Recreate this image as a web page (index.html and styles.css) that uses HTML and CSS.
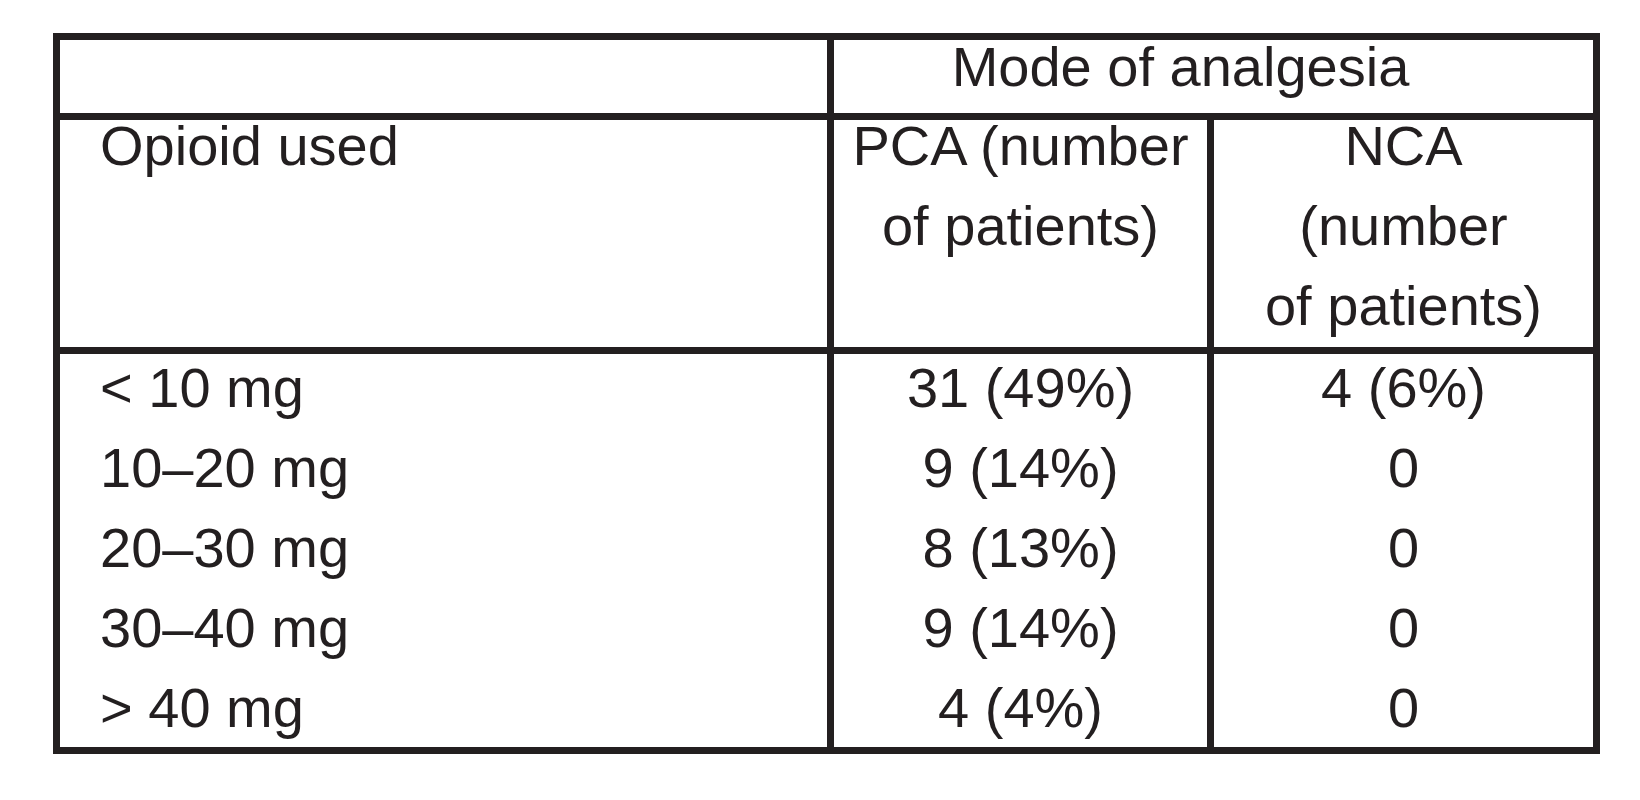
FILE: index.html
```html
<!DOCTYPE html>
<html lang="en">
<head>
<meta charset="utf-8">
<title>Opioid used by mode of analgesia</title>
<link rel="stylesheet" href="styles.css">
</head>
<body>
<div class="table">
  <div class="cell"></div>
  <div class="cell span2 group-head">Mode of analgesia</div>

  <div class="cell col-head left">
    <div class="line">Opioid used</div>
  </div>
  <div class="cell col-head center">
    <div class="line">PCA (number</div>
    <div class="line">of patients)</div>
  </div>
  <div class="cell col-head center">
    <div class="line">NCA</div>
    <div class="line">(number</div>
    <div class="line">of patients)</div>
  </div>

  <div class="cell body left">
    <div class="rows">
      <div class="row">&lt; 10 mg</div>
      <div class="row">10–20 mg</div>
      <div class="row">20–30 mg</div>
      <div class="row">30–40 mg</div>
      <div class="row">&gt; 40 mg</div>
    </div>
  </div>
  <div class="cell body center">
    <div class="rows">
      <div class="row">31 (49%)</div>
      <div class="row">9 (14%)</div>
      <div class="row">8 (13%)</div>
      <div class="row">9 (14%)</div>
      <div class="row">4 (4%)</div>
    </div>
  </div>
  <div class="cell body center">
    <div class="rows">
      <div class="row">4 (6%)</div>
      <div class="row">0</div>
      <div class="row">0</div>
      <div class="row">0</div>
      <div class="row">0</div>
    </div>
  </div>
</div>
</body>
</html>
```

FILE: styles.css
```css
html, body {
  margin: 0;
  background: #ffffff;
}

body {
  padding: 33px 0 0 53px;
  font-family: "Liberation Sans", Arial, sans-serif;
  font-size: 56px;
  color: #231f20;
}

.table {
  display: inline-grid;
  grid-template-columns: 767px 373px 379px;
  grid-template-rows: 73px 227px 393px;
  gap: 7px;
  padding: 7px;
  background: #231f20;
}

.cell {
  background: #ffffff;
}

.span2 {
  grid-column: span 2;
}

.group-head {
  text-align: center;
  line-height: 54px;
  padding-right: 66px;
}

.col-head {
  display: flex;
  flex-direction: column;
  gap: 28px;
}

.col-head .line {
  line-height: 52px;
  white-space: nowrap;
}

.left {
  padding-left: 40px;
  text-align: left;
}

.center {
  text-align: center;
}

.rows {
  display: flex;
  flex-direction: column;
  gap: 12px;
}

.row {
  line-height: 68px;
  white-space: nowrap;
}
```
